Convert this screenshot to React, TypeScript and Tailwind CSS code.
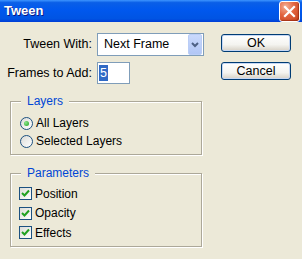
import React from 'react';

const font = { fontFamily: '"Liberation Sans", Arial, sans-serif' };

function CloseButton() {
  return (
    <div className="w-[21px] h-[21px] rounded-[3px] border border-white bg-[radial-gradient(circle_at_30%_25%,#f4b196_0%,#e2643f_45%,#c5421d_100%)] flex items-center justify-center shadow-[inset_-1px_-1px_1px_rgba(120,20,0,0.5)]">
      <svg width="13" height="13" viewBox="0 0 13 13">
        <path d="M2 2 L11 11 M11 2 L2 11" stroke="#fff" strokeWidth="2.2" strokeLinecap="square" />
      </svg>
    </div>
  );
}

function GroupBox({ title, height, children }: { title: string; height: string; children: React.ReactNode }) {
  return (
    <div className={`relative ml-[6px] w-[192px] ${height} border border-[#aca899] shadow-[1px_1px_0_#fff,inset_1px_1px_0_#fff]`}>
      <span className="absolute left-[10px] top-[-8px] px-[6px] bg-[#ece9d8] text-[#0046d5] text-[12px] leading-[14px]">
        {title}
      </span>
      {children}
    </div>
  );
}

function Radio({ checked, label }: { checked?: boolean; label: string }) {
  return (
    <div className="flex items-center h-[18px]">
      <div className="w-[13px] h-[13px] rounded-full border border-[#1c5180] bg-[linear-gradient(135deg,#dcdcd7,#ffffff)] flex items-center justify-center">
        {checked && <div className="w-[5px] h-[5px] rounded-full bg-[radial-gradient(circle_at_35%_35%,#8ae68a,#21a121)]" />}
      </div>
      <span className="ml-[3px] text-[12px] text-black">{label}</span>
    </div>
  );
}

function Check({ label }: { label: string }) {
  return (
    <div className="flex items-center h-[19.5px]">
      <div className="w-[13px] h-[13px] border border-[#1c5180] bg-[linear-gradient(135deg,#dcdcd7,#ffffff)] flex items-center justify-center">
        <svg width="9" height="9" viewBox="0 0 9 9">
          <path d="M1 4 L3.5 6.5 L8 1.5" stroke="#21a121" strokeWidth="2" fill="none" />
        </svg>
      </div>
      <span className="ml-[3px] text-[12px] text-black">{label}</span>
    </div>
  );
}

function XPButton({ label }: { label: string }) {
  return (
    <div className="w-[70px] h-[18px] rounded-[3px] border border-[#003c74] bg-[linear-gradient(#ffffff,#f4f4f0_60%,#d6d0c5)] shadow-[inset_0_0_0_1px_#c6d8f5] flex items-center justify-center text-[12.5px] text-black">
      {label}
    </div>
  );
}

export default function App() {
  return (
    <div className="w-[302px] h-[259px] bg-[#ece9d8] overflow-hidden" style={font}>
      <div className="h-[22px] flex items-center justify-between pl-[4px] pr-[2px] bg-[linear-gradient(#3d95ff_0%,#0a5fe7_12%,#0058ee_45%,#0054e3_85%,#003dd6_100%)]">
        <span className="text-white font-bold text-[13px] [text-shadow:1px_1px_0_#0a1883]">Tween</span>
        <CloseButton />
      </div>
      <div className="flex pl-[4px] pt-[11px]">
        <div className="w-[200px]">
          <div className="flex items-center h-[23px]">
            <span className="w-[88px] shrink-0 whitespace-nowrap text-right text-[12.5px] text-black">Tween With:</span>
            <div className="ml-[5px] w-[107px] h-[23px] border border-[#7f9db9] bg-white flex items-center justify-between pl-[6px] pr-[1px]">
              <span className="text-[12.5px] text-black">Next Frame</span>
              <div className="w-[14px] h-[21px] rounded-[2px] bg-[linear-gradient(#c9d9fc,#b1c6f5)] border border-[#bacdf6] flex items-center justify-center">
                <svg width="8" height="6" viewBox="0 0 8 6">
                  <path d="M1 1 L4 4 L7 1" stroke="#4d6185" strokeWidth="2" fill="none" />
                </svg>
              </div>
            </div>
          </div>
          <div className="flex items-center h-[22px] mt-[6px]">
            <span className="w-[88px] shrink-0 whitespace-nowrap text-right text-[12.5px] text-black">Frames to Add:</span>
            <div className="ml-[5px] w-[33px] h-[22px] border border-[#7f9db9] bg-white flex items-center pl-[1px]">
              <span className="bg-[#316ac5] text-white text-[12.5px] leading-[16px] px-[1px]">5</span>
            </div>
          </div>
          <div className="mt-[17px]">
            <GroupBox title="Layers" height="h-[54px]">
              <div className="pt-[12px] pl-[9px]">
                <Radio checked label="All Layers" />
                <Radio label="Selected Layers" />
              </div>
            </GroupBox>
          </div>
          <div className="mt-[18px]">
            <GroupBox title="Parameters" height="h-[74px]">
              <div className="pt-[10px] pl-[8px]">
                <Check label="Position" />
                <Check label="Opacity" />
                <Check label="Effects" />
              </div>
            </GroupBox>
          </div>
        </div>
        <div className="ml-[17px] pt-[1px] flex flex-col gap-[10px]">
          <XPButton label="OK" />
          <XPButton label="Cancel" />
        </div>
      </div>
    </div>
  );
}
